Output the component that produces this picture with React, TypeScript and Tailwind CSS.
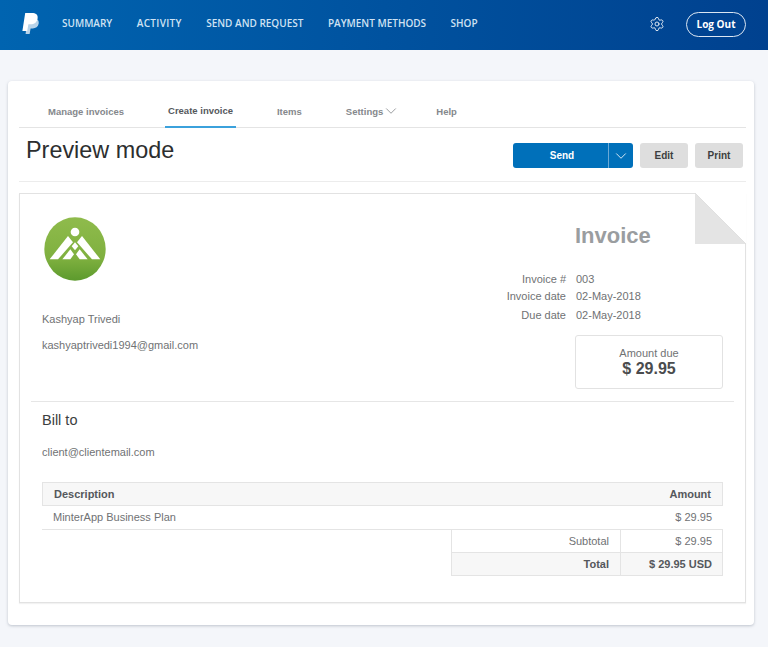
import React from "react";
import { Settings, ChevronDown } from "lucide-react";

const navItems = ["SUMMARY", "ACTIVITY", "SEND AND REQUEST", "PAYMENT METHODS", "SHOP"];

const PayPalLogo = () => (
  <svg width="18" height="22" viewBox="0 0 18 22" className="shrink-0">
    <path d="M5.5 5.5h6.2c3 0 5.6 1.4 5 5-.6 3.3-3 4.9-6 4.9H8.6l-1 5.6H3.6z" fill="#ffffff" opacity="0.72" />
    <path d="M3.2 0h6.6c4 0 6.4 1.7 5.8 5.4-.7 4-3.4 5.8-7 5.8H6.4L5.2 18H.4z" fill="#ffffff" />
  </svg>
);

const MinterLogo = () => (
  <svg width="62" height="64" viewBox="133 110 186 192" className="shrink-0">
    <defs>
      <linearGradient id="minterGreen" x1="0" y1="0" x2="0" y2="1">
        <stop offset="0" stopColor="#8fbb4c" />
        <stop offset="0.65" stopColor="#7fb03f" />
        <stop offset="1" stopColor="#5c9a2d" />
      </linearGradient>
    </defs>
    <ellipse cx="226" cy="206" rx="92" ry="95" fill="url(#minterGreen)" />
    <circle cx="226" cy="155" r="13" fill="#fff" />
    <polygon points="150,237 205,167 220,186 175,237" fill="#fff" />
    <polygon points="302,237 247,167 232,186 277,237" fill="#fff" />
    <polygon points="188,237 212,207 223,222 212,237" fill="#fff" />
    <polygon points="264,237 240,207 229,222 240,237" fill="#fff" />
    <polygon points="226,186 236,198 226,210 216,198" fill="#fff" />
  </svg>
);

const Fold = () => (
  <svg width="51" height="51" viewBox="0 0 51 51" className="absolute -top-px -right-px">
    <rect width="51" height="51" fill="#ffffff" />
    <polygon points="0,0 51,51 0,51" fill="#e4e4e4" />
    <line x1="0" y1="0" x2="51" y2="51" stroke="#e0e0e0" />
  </svg>
);

export default function App() {
  return (
    <div className="w-[768px] h-[647px] overflow-hidden bg-[#f4f6fa] font-['Liberation_Sans',Arial,sans-serif]">
      <header className="h-[50px] flex items-center pl-[22px] pr-[22px] pb-[2px] bg-gradient-to-r from-[#0064b0] via-[#00529f] to-[#00418f]">
        <PayPalLogo />
        <nav className="ml-[22px] -mt-px flex gap-[24.5px] font-['Open_Sans',sans-serif] text-[10px] font-semibold text-[#cfe2f3]">
          {navItems.map((item) => (
            <span key={item} className={item === "ACTIVITY" ? "tracking-[0.3px]" : ""}>{item}</span>
          ))}
        </nav>
        <Settings size={16} strokeWidth={1.25} className="ml-auto text-white" />
        <button className="ml-[21px] h-[25px] w-[60px] rounded-full border border-[#dbe6f2] font-['Open_Sans',sans-serif] text-[10px] font-bold text-white">
          Log Out
        </button>
      </header>

      <main className="mt-[31px] ml-2 w-[746px] h-[544px] rounded bg-white pl-[11px] pr-2 shadow-[0_1px_3px_rgba(90,100,120,0.35)]">
        <div className="h-[47px] flex items-end gap-[44px] border-b border-[#e4e4e4] pl-[29px] text-[9.5px] font-bold text-[#85888c]">
          <span className="pb-[8px]">Manage invoices</span>
          <span className="-mx-[3px] px-[3px] pb-[8px] -mb-px border-b-2 border-[#3ba1dc] text-[#55585c]">Create invoice</span>
          <span className="pb-[8px]">Items</span>
          <span className="pb-[8px] flex items-center -mr-[7.5px]">
            Settings
            <ChevronDown size={18} strokeWidth={1.1} className="-ml-[1.5px] -mb-[4px] -mt-[6px]" />
          </span>
          <span className="pb-[8px]">Help</span>
        </div>

        <div className="h-[54px] flex items-start justify-between border-b border-[#ececec] pl-[7px] pr-[3px]">
          <h1 className="mt-[6px] text-[23.4px] leading-[32px] text-[#2c2e2f]">Preview mode</h1>
          <div className="mt-[15px] flex gap-[7px] text-[10px] font-bold">
            <div className="flex h-[25px] w-[120px] rounded-[3px] bg-[#0070ba] text-white">
              <span className="flex-1 flex items-center justify-center pl-[3px] border-r border-[#6aa9d6]">Send</span>
              <span className="w-[24px] flex items-center justify-center">
                <ChevronDown size={18} strokeWidth={1.1} />
              </span>
            </div>
            <button className="h-[25px] w-[48px] rounded-[3px] bg-[#dedede] text-[#3c3e40]">Edit</button>
            <button className="h-[25px] w-[48px] rounded-[3px] bg-[#dedede] text-[#3c3e40]">Print</button>
          </div>
        </div>

        <section className="relative mt-[11px] h-[410px] border border-[#e2e2e2] text-[11px] text-[#707274] shadow-[0_1px_1px_rgba(0,0,0,0.05)]">
          <Fold />
          <div className="h-[208px] mx-[11px] border-b border-[#e6e6e6] flex justify-between pl-[11px] pr-[11px]">
            <div>
              <div className="mt-[23px] ml-[2px]"><MinterLogo /></div>
              <p className="mt-[31px] leading-[14px]">Kashyap Trivedi</p>
              <p className="mt-[12px] leading-[14px]">kashyaptrivedi1994@gmail.com</p>
            </div>
            <div className="w-[300px] flex flex-col items-end">
              <h2 className="w-[148px] mt-[27px] text-[22px] leading-[30px] font-bold text-[#9a9da0]">Invoice</h2>
              <dl className="mt-[21px] w-full grid grid-cols-[143px_147px] gap-x-[10px] leading-[14px]">
                <dt className="text-right">Invoice #</dt>
                <dd>003</dd>
                <dt className="mt-[3px] text-right">Invoice date</dt>
                <dd className="mt-[3px]">02-May-2018</dd>
                <dt className="mt-[5px] text-right">Due date</dt>
                <dd className="mt-[5px]">02-May-2018</dd>
              </dl>
              <div className="mt-[13px] h-[54px] w-[148px] rounded-[3px] border border-[#e2e2e2] flex flex-col items-center justify-center">
                <span className="leading-[13px]">Amount due</span>
                <span className="text-[16px] leading-[18px] font-bold text-[#4a4c4e]">$ 29.95</span>
              </div>
            </div>
          </div>

          <div className="px-[22px]">
            <h3 className="mt-[8px] text-[14.5px] leading-[20px] text-[#3c3e40]">Bill to</h3>
            <p className="mt-[15px] leading-[14px]">client@clientemail.com</p>

            <div className="mt-[23px]">
              <div className="h-[24px] px-[11px] flex items-center justify-between bg-[#f7f7f7] border border-[#e4e4e4] font-bold text-[#55585c]">
                <span>Description</span>
                <span>Amount</span>
              </div>
              <div className="h-[24px] px-[11px] flex items-center justify-between border-b border-[#e4e4e4]">
                <span>MinterApp Business Plan</span>
                <span>$ 29.95</span>
              </div>
              <div className="ml-auto w-[272px] border-x border-b border-[#e4e4e4]">
                <div className="h-[23px] flex border-b border-[#e4e4e4]">
                  <span className="flex-1 flex items-center justify-end pr-[11px] border-r border-[#e4e4e4]">Subtotal</span>
                  <span className="w-[101px] flex items-center justify-end pr-[10px]">$ 29.95</span>
                </div>
                <div className="h-[22px] flex bg-[#f7f7f7] font-bold text-[#55585c]">
                  <span className="flex-1 flex items-center justify-end pr-[11px] border-r border-[#e4e4e4]">Total</span>
                  <span className="w-[101px] flex items-center justify-end pr-[10px]">$ 29.95 USD</span>
                </div>
              </div>
            </div>
          </div>
        </section>
      </main>
    </div>
  );
}
